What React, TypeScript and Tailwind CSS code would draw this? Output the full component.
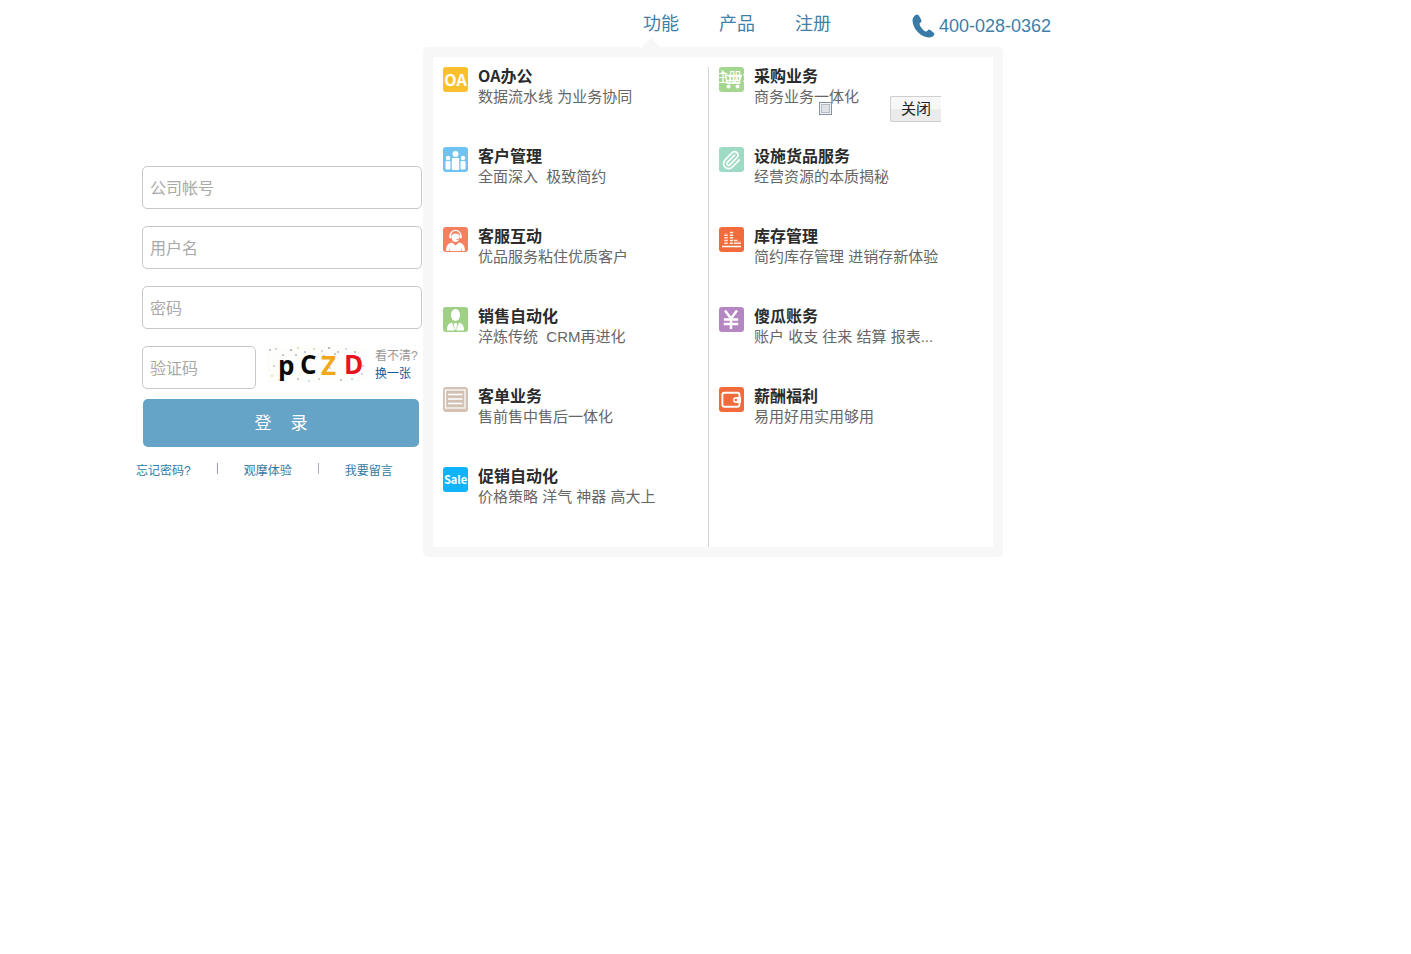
import { useState } from "react";

type Feature = {
  icon: React.ReactNode;
  color: string;
  title: string;
  desc: string;
};

const leftFeatures: Feature[] = [
  {
    color: "bg-[#fbc02d]",
    title: "OA办公",
    desc: "数据流水线 为业务协同",
    icon: (
      <text x="12.5" y="19" textAnchor="middle" fontFamily="Noto Sans CJK SC, sans-serif" fontSize="16" fontWeight="bold">
        OA
      </text>
    ),
  },
  {
    color: "bg-[#6ec3f2]",
    title: "客户管理",
    desc: "全面深入\u00a0 极致简约",
    icon: (
      <>
        <circle cx="12.5" cy="7" r="3" />
        <circle cx="5" cy="11" r="2.2" />
        <circle cx="20" cy="11" r="2.2" />
        <rect x="8.8" y="11" width="7.4" height="12" rx="1" />
        <rect x="2.5" y="14" width="5" height="8.5" rx="1" />
        <rect x="17.5" y="14" width="5" height="8.5" rx="1" />
      </>
    ),
  },
  {
    color: "bg-[#f58060]",
    title: "客服互动",
    desc: "优品服务粘住优质客户",
    icon: (
      <>
        <path d="M7.2 9a5.3 5.6 0 0 1 10.6 0" fill="none" stroke="currentColor" strokeWidth="1.3" />
        <path d="M8.5 8.5c1-2.8 7-2.8 8 0v2c0 2.5-2 4.5-4 4.5s-4-2-4-4.5z" />
        <path d="M17.5 9.5c0 2-1.5 3-4 3" fill="none" stroke="#f58060" strokeWidth="0.9" />
        <rect x="6.3" y="8" width="2" height="3.5" rx="1" />
        <rect x="16.7" y="8" width="2" height="3.5" rx="1" />
        <path d="M3 24c0-6 3-8 6-8.5l3.5 3 3.5-3c3 .5 6 2.5 6 8.5h-3l-1-3v3H7v-3l-1 3z" />
      </>
    ),
  },
  {
    color: "bg-[#9fd086]",
    title: "销售自动化",
    desc: "淬炼传统\u00a0 CRM再进化",
    icon: (
      <>
        <ellipse cx="12.5" cy="8" rx="4.6" ry="6" />
        <path d="M4 23.5c0-5 1.5-7 5-8l2.8 7.5-.8.5zM21 23.5c0-5-1.5-7-5-8L13.2 23l.8.5z" />
        <path d="M11.5 16h2l.8 1.5-1.3 5h-1l-1.3-5z" />
      </>
    ),
  },
  {
    color: "bg-[#d3c2b4]",
    title: "客单业务",
    desc: "售前售中售后一体化",
    icon: (
      <g fill="none" stroke="currentColor">
        <rect x="2.5" y="3" width="19.5" height="18" strokeWidth="1.2" />
        <path d="M5 7.5h14.5M5 12h14.5M5 16.5h14.5" strokeWidth="1.6" />
      </g>
    ),
  },
  {
    color: "bg-[#0fb4fc]",
    title: "促销自动化",
    desc: "价格策略 洋气 神器 高大上",
    icon: (
      <text x="12.5" y="17" textAnchor="middle" fontFamily="Noto Sans CJK SC, sans-serif" fontSize="11" fontWeight="bold">
        Sale
      </text>
    ),
  },
];

const rightFeatures: Feature[] = [
  {
    color: "bg-[#a5d68f]",
    title: "采购业务",
    desc: "商务业务一体化",
    icon: (
      <>
        <path d="M2 6h4l2 10h13M6.5 8.5H22l-1.5 5H8M11 8v6M14.5 8v6M18 8v6" fill="none" stroke="currentColor" strokeWidth="1.3" />
        <circle cx="9.5" cy="19.5" r="2" />
        <circle cx="18.5" cy="19.5" r="2" />
      </>
    ),
  },
  {
    color: "bg-[#9ddbc4]",
    title: "设施货品服务",
    desc: "经营资源的本质揭秘",
    icon: (
      <path
        d="m16 6-8.414 8.586a2 2 0 0 0 2.829 2.829l8.414-8.586a4 4 0 1 0-5.657-5.657l-8.379 8.551a6 6 0 1 0 8.485 8.485l8.379-8.551"
        transform="translate(2 3) scale(0.85)"
        fill="none"
        stroke="currentColor"
        strokeWidth="2"
        strokeLinecap="round"
      />
    ),
  },
  {
    color: "bg-[#f26b3c]",
    title: "库存管理",
    desc: "简约库存管理 进销存新体验",
    icon: (
      <g fill="none" stroke="currentColor">
        <path d="M3 19.5h19" strokeWidth="1.4" />
        <path d="M7 17V6M12.5 17V3.5M16.7 17v-5.5M20.2 17v-3" strokeWidth="3.4" strokeDasharray="1.5 1.2" opacity="0.85" />
      </g>
    ),
  },
  {
    color: "bg-[#b486c2]",
    title: "傻瓜账务",
    desc: "账户 收支 往来 结算 报表...",
    icon: <path d="M6 3.5l6 8 6-8M12 11.5V22M4.8 12.5h14.4M4.8 17h14.4" fill="none" stroke="currentColor" strokeWidth="2.5" />,
  },
  {
    color: "bg-[#f26b3c]",
    title: "薪酬福利",
    desc: "易用好用实用够用",
    icon: (
      <>
        <rect x="3.4" y="5.8" width="17" height="14" rx="2" fill="none" stroke="currentColor" strokeWidth="1.9" />
        <path d="M22 10v6h-5a3 3 0 0 1 0-6z" />
        <circle cx="16.8" cy="13" r="1.3" fill="#f26b3c" />
      </>
    ),
  },
];

const inputClass =
  "h-[43px] rounded-[5px] border border-[#c8c8c8] bg-white px-[7px] pt-0.5 text-base text-[#333] placeholder:text-[#a9a9a9] outline-none";

function FeatureItem({ icon, color, title, desc }: Feature) {
  return (
    <li className="flex h-20 gap-[10px]">
      <svg viewBox="0 0 25 25" fill="currentColor" className={`size-[25px] shrink-0 rounded-[3px] text-white ${color}`}>
        {icon}
      </svg>
      <div className="whitespace-nowrap">
        <h3 className="mb-1 font-['Noto_Sans_CJK_SC',sans-serif] text-base leading-4 font-bold text-[#2b2b2b]">{title}</h3>
        <p className="text-[15px] leading-5 text-[#666]">{desc}</p>
      </div>
    </li>
  );
}

function Captcha() {
  const dots = [
    [3, 4, "#bbb"], [9, 3, "#ccc"], [16, 9, "#bbb"], [24, 4, "#aaa"], [31, 2, "#ddd6a0"], [38, 6, "#bbb"],
    [47, 3, "#c8dca8"], [55, 5, "#ccc"], [62, 2, "#aaa"], [71, 6, "#bbb"], [79, 3, "#d8c8e8"], [88, 6, "#9c9"],
    [93, 12, "#bbb"], [7, 20, "#ccc"], [5, 30, "#eed9a8"], [31, 33, "#bbb"], [42, 35, "#b8dcea"], [52, 33, "#ccc"],
    [63, 22, "#dcb"], [74, 34, "#bbb"], [85, 33, "#a8d8d8"], [95, 28, "#bce"], [96, 20, "#dbb"], [29, 9, "#bbb"],
    [68, 8, "#bbb"], [12, 34, "#dec"], [26, 18, "#cdd"], [57, 10, "#bbb"],
  ] as const;
  return (
    <svg viewBox="0 0 100 36" className="h-9 w-[100px] overflow-visible" role="img" aria-label="验证码">
      <rect width="100" height="36" fill="#fdfefc" />
      {dots.map(([x, y, fill]) => (
        <circle key={`${x}-${y}`} cx={x} cy={y} r="1.1" fill={fill} />
      ))}
      <g fontFamily="Open Sans, sans-serif" fontSize="26" fontWeight="bold">
        <text x="11" y="29" fill="#0a0a0a">p</text>
        <text x="33" y="28" fill="#0a0a0a">C</text>
        <text x="54" y="29" fill="#f0a818">Z</text>
        <text x="77" y="28" fill="#e8141c">D</text>
      </g>
    </svg>
  );
}

function LoginForm() {
  return (
    <form className="w-[287px] shrink-0 pt-[119px]" onSubmit={(e) => e.preventDefault()}>
      <div className="flex flex-col gap-[17px] pr-px pl-1.5">
        <input className={inputClass} type="text" placeholder="公司帐号" aria-label="公司帐号" />
        <input className={inputClass} type="text" placeholder="用户名" aria-label="用户名" />
        <input className={inputClass} type="password" placeholder="密码" aria-label="密码" />
        <div className="flex items-start">
          <input className={`${inputClass} w-[114px]`} type="text" placeholder="验证码" aria-label="验证码" />
          <div className="ml-[11px]">
            <Captcha />
          </div>
          <div className="ml-2 pt-px text-xs leading-[18px] whitespace-nowrap">
            <p className="text-[#999]">看不清?</p>
            <a href="#" className="text-[#0b5a9d]">换一张</a>
          </div>
        </div>
      </div>
      <div className="mt-[10px] pr-1 pl-[7px]">
        <button type="submit" className="h-12 w-full rounded-[5px] bg-[#65a3c7] pt-0.5 text-[17px] whitespace-pre text-white">
          {"登    录"}
        </button>
      </div>
      <div className="mt-[14px] flex items-start gap-[26px] text-xs leading-5 text-[#3579a3]">
        <a href="#">忘记密码?</a>
        <span className="mt-0.5 h-[11px] w-px bg-[#b08fc0]" />
        <a href="#">观摩体验</a>
        <span className="mt-0.5 h-[11px] w-px bg-[#b0a8c0]" />
        <a href="#">我要留言</a>
      </div>
    </form>
  );
}

export default function App() {
  const [agree, setAgree] = useState(false);

  return (
    <div className="min-h-screen bg-white font-['Liberation_Sans','Noto_Sans_CJK_SC',sans-serif]">
      <div className="mx-auto max-w-[1139px]">
        <header className="flex h-[47px] items-center justify-end pr-56 text-lg text-[#3f80a9]">
          <nav className="relative flex h-full gap-10 leading-[49px]">
            <a href="#">功能</a>
            <a href="#">产品</a>
            <a href="#">注册</a>
            <svg viewBox="0 0 18 9" className="absolute bottom-0 -left-px h-[9px] w-[18px]">
              <path d="M0 9L9 0l9 9z" fill="#f7f7f7" />
            </svg>
          </nav>
          <div className="ml-[81px] flex items-center gap-1 pt-1">
            <svg viewBox="0 0 23 24" className="h-6 w-[23px]" fill="#3a7ba6">
              <path d="M5.5.5C3 .5.5 3.5.5 6.5c0 8 8.5 17 16.5 17 3 0 5-1.5 5.5-3.5.2-.8-4.5-4.5-5.5-4.5s-1.8 2.2-3 2c-2.5-.5-6-5-6.5-7.5-.2-1.2 1.7-1.5 2-2.5C9.7 6.5 7 .5 5.500.5z" />
            </svg>
            <span>400-028-0362</span>
          </div>
        </header>

        <main className="flex items-start">
          <LoginForm />

          <section className="relative w-[580px] shrink-0 rounded-[5px] border-[10px] border-[#f7f7f7] bg-white">
            <div className="flex pt-[10px]">
              <ul className="w-[276px] border-r border-[#d4d4d4] pl-[10px]">
                {leftFeatures.map((f) => (
                  <FeatureItem key={f.title} {...f} />
                ))}
              </ul>
              <ul className="flex-1 pl-[10px]">
                {rightFeatures.map((f) => (
                  <FeatureItem key={f.title} {...f} />
                ))}
              </ul>
            </div>

            {/* registration bar floating over the second column */}
            <span className="absolute top-3 left-[281px] text-sm leading-4 text-white">注册:</span>
            <input
              type="checkbox"
              aria-label="注册"
              checked={agree}
              onChange={(e) => setAgree(e.target.checked)}
              className="absolute top-[45px] left-[386px] size-[13px] appearance-none border border-[#8491a3] bg-[#dfe2e5] shadow-[inset_0_0_0_1px_#f4f4f4,inset_0_0_0_2px_#b4bac4] checked:bg-[#3f80a9]"
            />
            <button
              type="button"
              className="absolute top-[39px] left-[457px] h-[26px] w-[51px] rounded-l-xs border border-r-0 border-[#cfcfcf] bg-linear-to-b from-[#f7f7f7] from-50% to-[#ebebec] to-50% text-[15px] leading-6 text-[#222]"
            >
              关闭
            </button>
          </section>
        </main>
      </div>
    </div>
  );
}
